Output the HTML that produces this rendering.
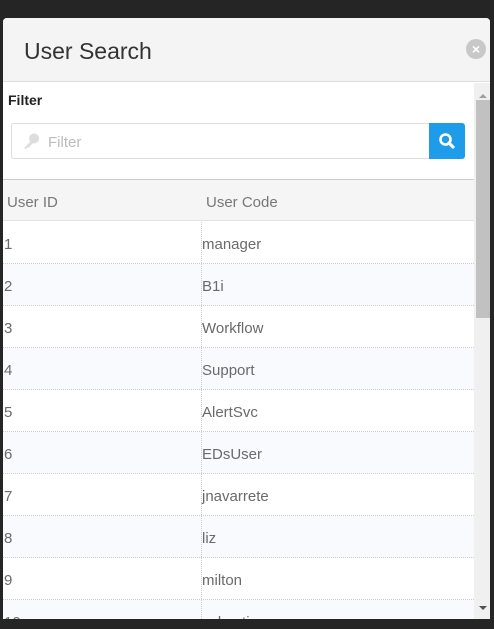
<!DOCTYPE html>
<html><head><style>
*{box-sizing:border-box;margin:0;padding:0}
body{width:494px;height:629px;background:#252526;position:relative;overflow:hidden;font-family:"Liberation Sans",sans-serif}
.m{position:absolute;left:3px;top:18px;width:487px;height:601px;background:#fff;border-radius:4px 4px 0 0;overflow:hidden}
.hd{height:64px;background:#f4f4f4;border-bottom:1px solid #ddd;position:relative}
.hd h1{position:absolute;left:21px;top:20px;font-weight:normal;font-size:23px;color:#333}
.x{position:absolute;left:463px;top:21px;width:20px;height:20px;border-radius:50%;background:#c8c8c8;color:#fff;font-size:14px;font-weight:bold;text-align:center;line-height:20px}
.body{position:absolute;left:0;top:65px;width:471px;bottom:0}
.fl{position:absolute;left:5px;top:9px;font-weight:bold;font-size:14px;color:#222}
.in{position:absolute;left:8px;top:40px;width:453px;height:36px;border:1px solid #ddd;border-radius:3px;background:#fff}
.in span{position:absolute;left:36px;top:10px;font-size:15px;color:#bbb}
.btn{position:absolute;left:426px;top:40px;width:36px;height:36px;background:#1e9be9;border-radius:0 3px 3px 0}
.th{position:absolute;left:0;top:96px;width:471px;height:42px;background:#f5f5f5;border-top:1px solid #ccc;border-bottom:1px solid #e3e3e3}
.th span,.r span{position:absolute;top:14px;font-size:15px;color:#777}
.r{position:absolute;left:0;width:471px;height:42px;border-bottom:1px dotted #ccc}
.r:nth-child(even){background:#f8fafd}
.r span{color:#6a6a6a;top:14px}
.c1{left:1px}.c2{left:199px}
.r .div{position:absolute;left:198px;top:0;bottom:0;border-left:1px dotted #ccc}
.sb{position:absolute;left:471px;top:65px;width:16px;bottom:0;background:#f0f0f0}
.th1{position:absolute;left:473px;top:82px;width:14px;height:218px;background:#c1c1c1}
</style></head><body>
<div class="m">
<div class="hd"><h1>User Search</h1><div class="x">×</div></div>
<div class="body">
<div class="fl">Filter</div>
<div class="in"><svg style="position:absolute;left:10px;top:9px" width="18" height="17" viewBox="0 0 18 17"><circle cx="12" cy="5.5" r="5" fill="#ddd"/><path d="M9 8 L2 15 L4 16 L6 14 L7 15 L8 13 L11 10Z" fill="#ddd"/></svg><span>Filter</span></div>
<div class="btn"><svg width="36" height="36" viewBox="0 0 36 36"><circle cx="16.5" cy="16.5" r="5" fill="none" stroke="#fff" stroke-width="2.6"/><path d="M20 20 L24 24" stroke="#fff" stroke-width="3.2" stroke-linecap="round"/></svg></div>
<div class="th"><span class="c1" style="left:4px">User ID</span><span class="c2" style="left:203px">User Code</span></div>
<div style="position:absolute;left:0;top:139px;width:471px">
<div class="r" style="top:0"><div class="div"></div><span class="c1">1</span><span class="c2">manager</span></div>
<div class="r" style="top:42px"><div class="div"></div><span class="c1">2</span><span class="c2">B1i</span></div>
<div class="r" style="top:84px"><div class="div"></div><span class="c1">3</span><span class="c2">Workflow</span></div>
<div class="r" style="top:126px"><div class="div"></div><span class="c1">4</span><span class="c2">Support</span></div>
<div class="r" style="top:168px"><div class="div"></div><span class="c1">5</span><span class="c2">AlertSvc</span></div>
<div class="r" style="top:210px"><div class="div"></div><span class="c1">6</span><span class="c2">EDsUser</span></div>
<div class="r" style="top:252px"><div class="div"></div><span class="c1">7</span><span class="c2">jnavarrete</span></div>
<div class="r" style="top:294px"><div class="div"></div><span class="c1">8</span><span class="c2">liz</span></div>
<div class="r" style="top:336px"><div class="div"></div><span class="c1">9</span><span class="c2">milton</span></div>
<div class="r" style="top:378px"><div class="div"></div><span class="c1">10</span><span class="c2">sebastian</span></div>
</div>
</div>
<div class="sb"></div><div class="th1"></div>
<div style="position:absolute;left:476px;top:72px;border:4px solid transparent;border-bottom:4px solid #a0a0a0;width:0;height:0"></div>
<div style="position:absolute;left:476px;top:588px;border:4px solid transparent;border-top:4px solid #505050;width:0;height:0"></div>
</div>
</body></html>
